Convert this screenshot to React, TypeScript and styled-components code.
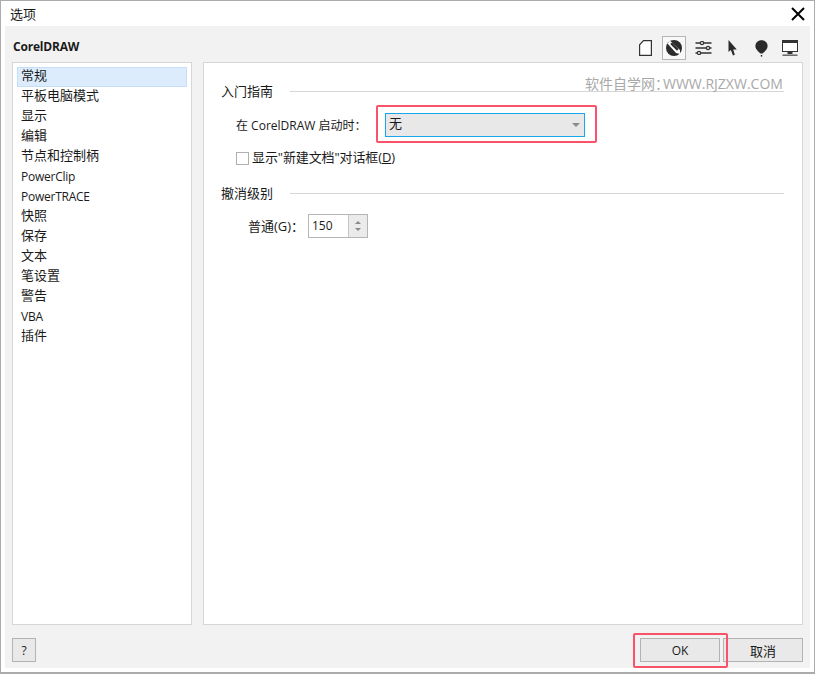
import React from "react";
import styled, { createGlobalStyle } from "styled-components";

const GlobalStyle = createGlobalStyle`
  html, body {
    margin: 0;
    padding: 0;
    background: #fff;
  }
  body {
    font-family: "Open Sans", "Noto Sans CJK SC", sans-serif;
    font-size: 13px;
    color: #1a1a1a;
  }
  * {
    box-sizing: border-box;
  }
`;

const Window = styled.div`
  width: 815px;
  height: 674px;
  display: flex;
  flex-direction: column;
  background: #fff;
  border: 1px solid #ababab;
  border-bottom-width: 2px;
`;

const TitleBar = styled.div`
  height: 25px;
  flex: none;
  display: flex;
  align-items: center;
  justify-content: space-between;
  padding: 0 9px;
`;

const Title = styled.span`
  font-family: "Noto Sans CJK SC", sans-serif;
  font-size: 13px;
`;

const Client = styled.div`
  flex: 1;
  margin: 0 4px 4px 4px;
  padding: 0 7px;
  background: #f2f2f2;
  display: flex;
  flex-direction: column;
  position: relative;
`;

const Header = styled.div`
  height: 36px;
  flex: none;
  display: flex;
  align-items: center;
  justify-content: space-between;
`;

const Brand = styled.span`
  font-size: 12px;
  font-weight: 700;
  letter-spacing: -0.2px;
  margin: 5px 0 0 1px;
`;

const Tools = styled.div`
  display: flex;
  align-items: center;
  margin: 8px 1px 0 0;
`;

const Tool = styled.div<{ $active?: boolean }>`
  width: 24px;
  height: 24px;
  margin-left: 5px;
  display: flex;
  align-items: center;
  justify-content: center;
  border: 1px solid ${(p) => (p.$active ? "#b5b5b5" : "transparent")};
  background: ${(p) => (p.$active ? "#f8f8f8" : "transparent")};
`;

const Body = styled.div`
  flex: 1;
  display: flex;
  gap: 11px;
  min-height: 0;
`;

const Sidebar = styled.ul`
  list-style: none;
  margin: 0;
  width: 180px;
  flex: none;
  padding: 4px;
  background: #fff;
  border: 1px solid #d6d6d6;
`;

const SideItem = styled.li<{ $selected?: boolean; $latin?: boolean }>`
  height: 20px;
  line-height: ${(p) => (p.$latin ? "18px" : "15px")};
  padding-left: 3px;
  font-size: ${(p) => (p.$latin ? "12px" : "13px")};
  letter-spacing: ${(p) => (p.$latin ? "-0.25px" : "0")};
  white-space: nowrap;
  border: 1px solid ${(p) => (p.$selected ? "#c6dff9" : "transparent")};
  background: ${(p) => (p.$selected ? "#dcecfd" : "transparent")};
`;

const Panel = styled.div`
  flex: 1;
  background: #fff;
  border: 1px solid #d6d6d6;
  padding: 18px 18px 0 17px;
`;

const GroupHead = styled.div<{ $top?: number }>`
  height: 20px;
  margin-top: ${(p) => p.$top ?? 0}px;
  display: flex;
  align-items: center;
  gap: 17px;
  font-size: 13px;
`;

const GroupTitle = styled.span<{ $lift: number }>`
  margin-bottom: ${(p) => p.$lift}px;
`;

const GroupRule = styled.div`
  flex: 1;
  height: 1px;
  background: #d6d6d6;
`;

const FieldRow = styled.div<{ $indent: number; $top: number }>`
  display: flex;
  align-items: center;
  margin-left: ${(p) => p.$indent}px;
  margin-top: ${(p) => p.$top}px;
`;

const FieldLabel = styled.span<{ $width: number; $size: number; $lift?: number }>`
  width: ${(p) => p.$width}px;
  flex: none;
  font-size: ${(p) => p.$size}px;
  margin-bottom: ${(p) => p.$lift ?? 0}px;
  white-space: nowrap;
`;

const Select = styled.div`
  width: 200px;
  height: 24px;
  display: flex;
  align-items: center;
  justify-content: space-between;
  padding: 0 3px 5px 3px;
  background: #e8e8e8;
  border: 1px solid #17a6ea;
  font-size: 13px;
`;

const Arrow = styled.span`
  width: 0;
  height: 0;
  margin: 4px 1px 0 0;
  border-left: 4px solid transparent;
  border-right: 4px solid transparent;
  border-top: 4px solid #8a8a8a;
`;

const Checkbox = styled.span`
  width: 13px;
  height: 13px;
  flex: none;
  margin-right: 3px;
  background: #fff;
  border: 1px solid #b0b0b0;
`;

const Underlined = styled.span`
  text-decoration: underline;
`;

const CheckLabel = styled.span`
  font-size: 13px;
  line-height: 16px;
  letter-spacing: -0.1px;
  margin-bottom: 2px;
`;

const Spinner = styled.div`
  width: 60px;
  height: 24px;
  display: flex;
  background: #fff;
  border: 1px solid #b5b5b5;
`;

const SpinValue = styled.div`
  flex: 1;
  line-height: 22px;
  padding-left: 3px;
  font-size: 12px;
`;

const SpinButtons = styled.div`
  width: 19px;
  display: flex;
  flex-direction: column;
  align-items: center;
  justify-content: space-around;
  padding: 4px 0;
  background: #ebebeb;
  border-left: 1px solid #c4c4c4;
`;

const SpinArrow = styled.span<{ $down?: boolean }>`
  width: 0;
  height: 0;
  border-left: 3px solid transparent;
  border-right: 3px solid transparent;
  border-${(p) => (p.$down ? "top" : "bottom")}: 3px solid #8a8a8a;
`;

const Footer = styled.div`
  height: 43px;
  flex: none;
  display: flex;
  align-items: flex-start;
  justify-content: space-between;
  padding-top: 13px;
`;

const ButtonGroup = styled.div`
  display: flex;
  gap: 3px;
`;

const Button = styled.div<{ $width: number; $size?: number }>`
  width: ${(p) => p.$width}px;
  height: 24px;
  display: flex;
  align-items: center;
  justify-content: center;
  background: #e9e9e9;
  border: 1px solid #b3b3b3;
  font-size: ${(p) => p.$size ?? 12}px;
`;

const Highlight = styled.div`
  position: absolute;
  border: 2px solid #fa5369;
  border-radius: 2px;
  pointer-events: none;
`;

const SelectHighlight = styled(Highlight)`
  left: 371px;
  top: 79px;
  width: 221px;
  height: 38px;
`;

const OkHighlight = styled(Highlight)`
  left: 628px;
  top: 607px;
  width: 95px;
  height: 35px;
`;

const Watermark = styled.div`
  position: absolute;
  left: 580px;
  top: 48px;
  font-size: 14px;
  line-height: 20px;
  color: #a8a8a8;
  white-space: nowrap;
`;

const WatermarkUrl = styled.span`
  margin-left: -6px;
`;

const CloseIcon = () => (
  <svg width="14" height="14" viewBox="0 0 14 14">
    <path d="M1 1 L13 13 M13 1 L1 13" stroke="#000" strokeWidth="2" fill="none" />
  </svg>
);

const PageIcon = () => (
  <svg width="13" height="16" viewBox="0 0 13 16">
    <path d="M4.5 0.6 H12.4 V15.4 H0.6 V4.8 Z" stroke="#333" strokeWidth="1.2" fill="#fff" />
  </svg>
);

const PenIcon = () => (
  <svg width="16" height="16" viewBox="0 0 16 16">
    <circle cx="8" cy="8" r="8" fill="#2b2b2b" />
    <path d="M1.5 3.5 L4 0.8 L14 10 L14 14 L10 13 Z" fill="#fff" />
    <path d="M4.2 4 L6 2.4 L12.6 9 L11 10.8 Z" fill="#2b2b2b" />
  </svg>
);

const SlidersIcon = () => (
  <svg width="17" height="14" viewBox="0 0 17 14">
    <g stroke="#333" strokeWidth="1.3" fill="#fff">
      <path d="M0.5 2 H16.5 M0.5 7 H16.5 M0.5 12 H16.5" />
      <circle cx="7" cy="2" r="1.6" />
      <circle cx="13" cy="7" r="1.6" />
      <circle cx="4" cy="12" r="1.6" />
    </g>
  </svg>
);

const CursorIcon = () => (
  <svg width="9" height="16" viewBox="0 0 9 16">
    <path d="M0.5 0 V12 L2.8 10 L5 15.5 L6.8 14.8 L5.2 9.4 H8.8 Z" fill="#2b2b2b" />
  </svg>
);

const BalloonIcon = () => (
  <svg width="13" height="17" viewBox="0 0 13 17">
    <path d="M6.5 0.3 C2.8 0.3 0.4 3 0.4 6 C0.4 9.5 4 12.3 5.5 13.4 H7.5 C9 12.3 12.6 9.5 12.6 6 C12.6 3 10.2 0.3 6.5 0.3 Z" fill="#2b2b2b" />
    <rect x="5.8" y="15" width="1.4" height="1.6" fill="#2b2b2b" />
  </svg>
);

const MonitorIcon = () => (
  <svg width="16" height="16" viewBox="0 0 16 16">
    <rect x="0.5" y="0.5" width="15" height="11" fill="#fff" stroke="#333" strokeWidth="1" />
    <rect x="1" y="1" width="14" height="2" fill="#333" />
    <rect x="5.5" y="12" width="5" height="2" fill="#333" />
    <rect x="0.5" y="14.6" width="15" height="1.1" fill="#333" />
  </svg>
);

const categories = [
  { name: "常规" },
  { name: "平板电脑模式" },
  { name: "显示" },
  { name: "编辑" },
  { name: "节点和控制柄" },
  { name: "PowerClip", latin: true },
  { name: "PowerTRACE", latin: true },
  { name: "快照" },
  { name: "保存" },
  { name: "文本" },
  { name: "笔设置" },
  { name: "警告" },
  { name: "VBA", latin: true },
  { name: "插件" },
];

export default function App() {
  return (
    <>
      <GlobalStyle />
      <Window>
        <TitleBar>
          <Title>选项</Title>
          <CloseIcon />
        </TitleBar>
        <Client>
          <Header>
            <Brand>CorelDRAW</Brand>
            <Tools>
              <Tool><PageIcon /></Tool>
              <Tool $active><PenIcon /></Tool>
              <Tool><SlidersIcon /></Tool>
              <Tool><CursorIcon /></Tool>
              <Tool><BalloonIcon /></Tool>
              <Tool><MonitorIcon /></Tool>
            </Tools>
          </Header>
          <Body>
            <Sidebar>
              {categories.map((item, i) => (
                <SideItem key={item.name} $selected={i === 0} $latin={item.latin}>
                  {item.name}
                </SideItem>
              ))}
            </Sidebar>
            <Panel>
              <GroupHead>
                <GroupTitle $lift={1}>入门指南</GroupTitle>
                <GroupRule />
              </GroupHead>
              <FieldRow $indent={15} $top={12}>
                <FieldLabel $width={149} $size={12}>在 CorelDRAW 启动时：</FieldLabel>
                <Select>
                  无
                  <Arrow />
                </Select>
              </FieldRow>
              <FieldRow $indent={15} $top={12}>
                <Checkbox />
                <CheckLabel>
                  显示"新建文档"对话框(<Underlined>D</Underlined>)
                </CheckLabel>
              </FieldRow>
              <GroupHead $top={16}>
                <GroupTitle $lift={2}>撤消级别</GroupTitle>
                <GroupRule />
              </GroupHead>
              <FieldRow $indent={27} $top={11}>
                <FieldLabel $width={60} $size={13} $lift={1}>普通(G)：</FieldLabel>
                <Spinner>
                  <SpinValue>150</SpinValue>
                  <SpinButtons>
                    <SpinArrow />
                    <SpinArrow $down />
                  </SpinButtons>
                </Spinner>
              </FieldRow>
            </Panel>
          </Body>
          <Footer>
            <Button $width={24}>?</Button>
            <ButtonGroup>
              <Button $width={80}>OK</Button>
              <Button $width={80} $size={13}>取消</Button>
            </ButtonGroup>
          </Footer>
          <Watermark>
            软件自学网：<WatermarkUrl>WWW.RJZXW.COM</WatermarkUrl>
          </Watermark>
          <SelectHighlight />
          <OkHighlight />
        </Client>
      </Window>
    </>
  );
}
